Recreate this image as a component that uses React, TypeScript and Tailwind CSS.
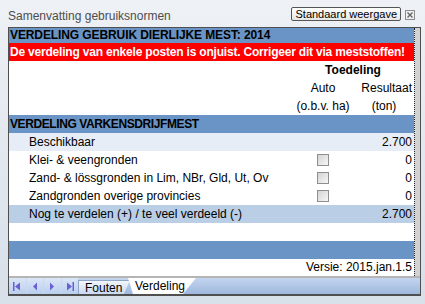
import React from "react";

type Row = {
  label: string;
  value?: string;
  check?: boolean;
  tone: "light" | "white" | "mid";
};

const rows: Row[] = [
  { label: "Beschikbaar", value: "2.700", tone: "light" },
  { label: "Klei- & veengronden", value: "0", check: true, tone: "white" },
  { label: "Zand- & lössgronden in Lim, NBr, Gld, Ut, Ov", value: "0", check: true, tone: "white" },
  { label: "Zandgronden overige provincies", value: "0", check: true, tone: "white" },
  { label: "Nog te verdelen (+) / te veel verdeeld (-)", value: "2.700", tone: "mid" },
];

const toneClass = {
  light: "bg-[#e6edf6]",
  white: "bg-white",
  mid: "bg-[#bacee6]",
};

function Checkbox() {
  return (
    <span className="block w-[12px] h-[12px] border border-[#8e8e8e] bg-gradient-to-br from-[#d4d4d4] to-[#f6f6f6]" />
  );
}

function NavIcon({ kind }: { kind: "first" | "prev" | "next" | "last" }) {
  return (
    <svg width="8" height="9" viewBox="0 0 8 9" className="fill-[#6a5fd6]">
      {kind === "first" && (
        <>
          <rect x="0" y="0" width="1.5" height="9" />
          <path d="M7 0.5 L2 4.5 L7 8.5 Z" />
        </>
      )}
      {kind === "prev" && <path d="M6 0.5 L2 4.5 L6 8.5 Z" />}
      {kind === "next" && <path d="M2 0.5 L6 4.5 L2 8.5 Z" />}
      {kind === "last" && (
        <>
          <path d="M1 0.5 L6 4.5 L1 8.5 Z" />
          <rect x="6.5" y="0" width="1.5" height="9" />
        </>
      )}
    </svg>
  );
}

export default function App() {
  return (
    <div
      className="w-[425px] h-[304px] overflow-hidden bg-gradient-to-b from-[#eef1f5] to-[#d7dfe9] text-black"
      style={{ fontFamily: '"Liberation Sans", Arial, sans-serif' }}
    >
      {/* Top bar */}
      <div className="h-[27px] flex items-start">
        <span className="ml-[8px] mt-[8px] text-[12px] leading-[16px] text-[#4d4d4d]">
          Samenvatting gebruiksnormen
        </span>
        <button className="ml-auto mt-[7px] h-[14px] px-[3px] border border-[#555] rounded-[2px] bg-gradient-to-b from-white to-[#e6e6e6] text-[11px] leading-[12px]">
          Standaard weergave
        </button>
        <span className="ml-[4px] mr-[10px] mt-[10px] w-[10px] h-[10px] border border-[#8c8c8c] bg-[#f0f0f0] flex items-center justify-center">
          <svg width="6" height="6" viewBox="0 0 6 6" className="stroke-[#666]" strokeWidth="1.4">
            <path d="M0.5 0.5 L5.5 5.5 M5.5 0.5 L0.5 5.5" />
          </svg>
        </span>
      </div>

      {/* Frame */}
      <div className="ml-[8px] w-[413px] border-t border-l border-r border-b-2 border-[#4f4f4f] flex flex-col">
        <div className="flex">
          <div className="w-[406px] border-r border-dotted border-[#222] flex flex-col text-[12px]">
            <div className="h-[15px] bg-[#6994c5] pl-[1px] font-bold leading-[15px] tracking-[-0.1px]">
              VERDELING GEBRUIK DIERLIJKE MEST: 2014
            </div>
            <div className="h-[18px] bg-[#ff0000] pl-[1px] font-bold text-white leading-[18px] whitespace-nowrap tracking-[-0.2px]">
              De verdeling van enkele posten is onjuist. Corrigeer dit via meststoffen!
            </div>
            <div className="h-[18px] bg-white flex leading-[18px]">
              <div className="w-[283px]" />
              <div className="w-[122px] text-center font-bold">Toedeling</div>
            </div>
            <div className="h-[18px] bg-white flex leading-[18px]">
              <div className="w-[283px]" />
              <div className="w-[62px] text-center">Auto</div>
              <div className="w-[60px] text-right pr-[2px]">Resultaat</div>
            </div>
            <div className="h-[18px] bg-white flex leading-[18px]">
              <div className="w-[283px]" />
              <div className="w-[62px] text-center">(o.b.v. ha)</div>
              <div className="w-[60px] text-center">(ton)</div>
            </div>
            <div className="h-[18px] bg-[#6994c5] pl-[1px] font-bold leading-[18px] tracking-[-0.4px]">
              VERDELING VARKENSDRIJFMEST
            </div>
            {rows.map((r) => (
              <div key={r.label} className={`h-[18px] flex items-center leading-[18px] ${toneClass[r.tone]}`}>
                <div className="w-[283px] pl-[20px] whitespace-nowrap">{r.label}</div>
                <div className="w-[62px] flex justify-center">{r.check && <Checkbox />}</div>
                <div className="w-[60px] text-right pr-[2px]">{r.value}</div>
              </div>
            ))}
            <div className="h-[18px] bg-white" />
            <div className="h-[18px] bg-[#6994c5]" />
            <div className="h-[17px] bg-white text-right pr-[2px] leading-[17px]">Versie: 2015.jan.1.5</div>
          </div>
          <div className="w-[5px] bg-[#d2d2d2]" />
        </div>
        <div className="h-[2px] bg-[#b5b5b5]" />

        {/* Sheet tabs */}
        <div className="h-[16px] flex bg-gradient-to-b from-[#c4d5ee] to-[#9fb8de]">
          <div className="flex w-[69px] bg-gradient-to-b from-[#dbe6f6] to-[#bacfee]">
            {(["first", "prev", "next", "last"] as const).map((k) => (
              <div key={k} className="flex-1 flex items-center justify-center border-r border-[#c9d8ee] last:border-r-0">
                <NavIcon kind={k} />
              </div>
            ))}
          </div>
          <div className="w-[52px] mt-[2px] border-l border-t border-[#8ea5c8] bg-gradient-to-b from-[#f2f6fc] to-[#c9d9f0] pl-[6px] text-[12px] leading-[14px] [clip-path:polygon(0_0,100%_0,calc(100%-6px)_100%,0_100%)]">
            Fouten
          </div>
          <div className="-ml-[2px] w-[68px] bg-white pl-[7px] text-[12px] leading-[16px] [clip-path:polygon(0_0,100%_0,calc(100%-13px)_100%,5px_100%)]">
            Verdeling
          </div>
        </div>
      </div>
    </div>
  );
}
